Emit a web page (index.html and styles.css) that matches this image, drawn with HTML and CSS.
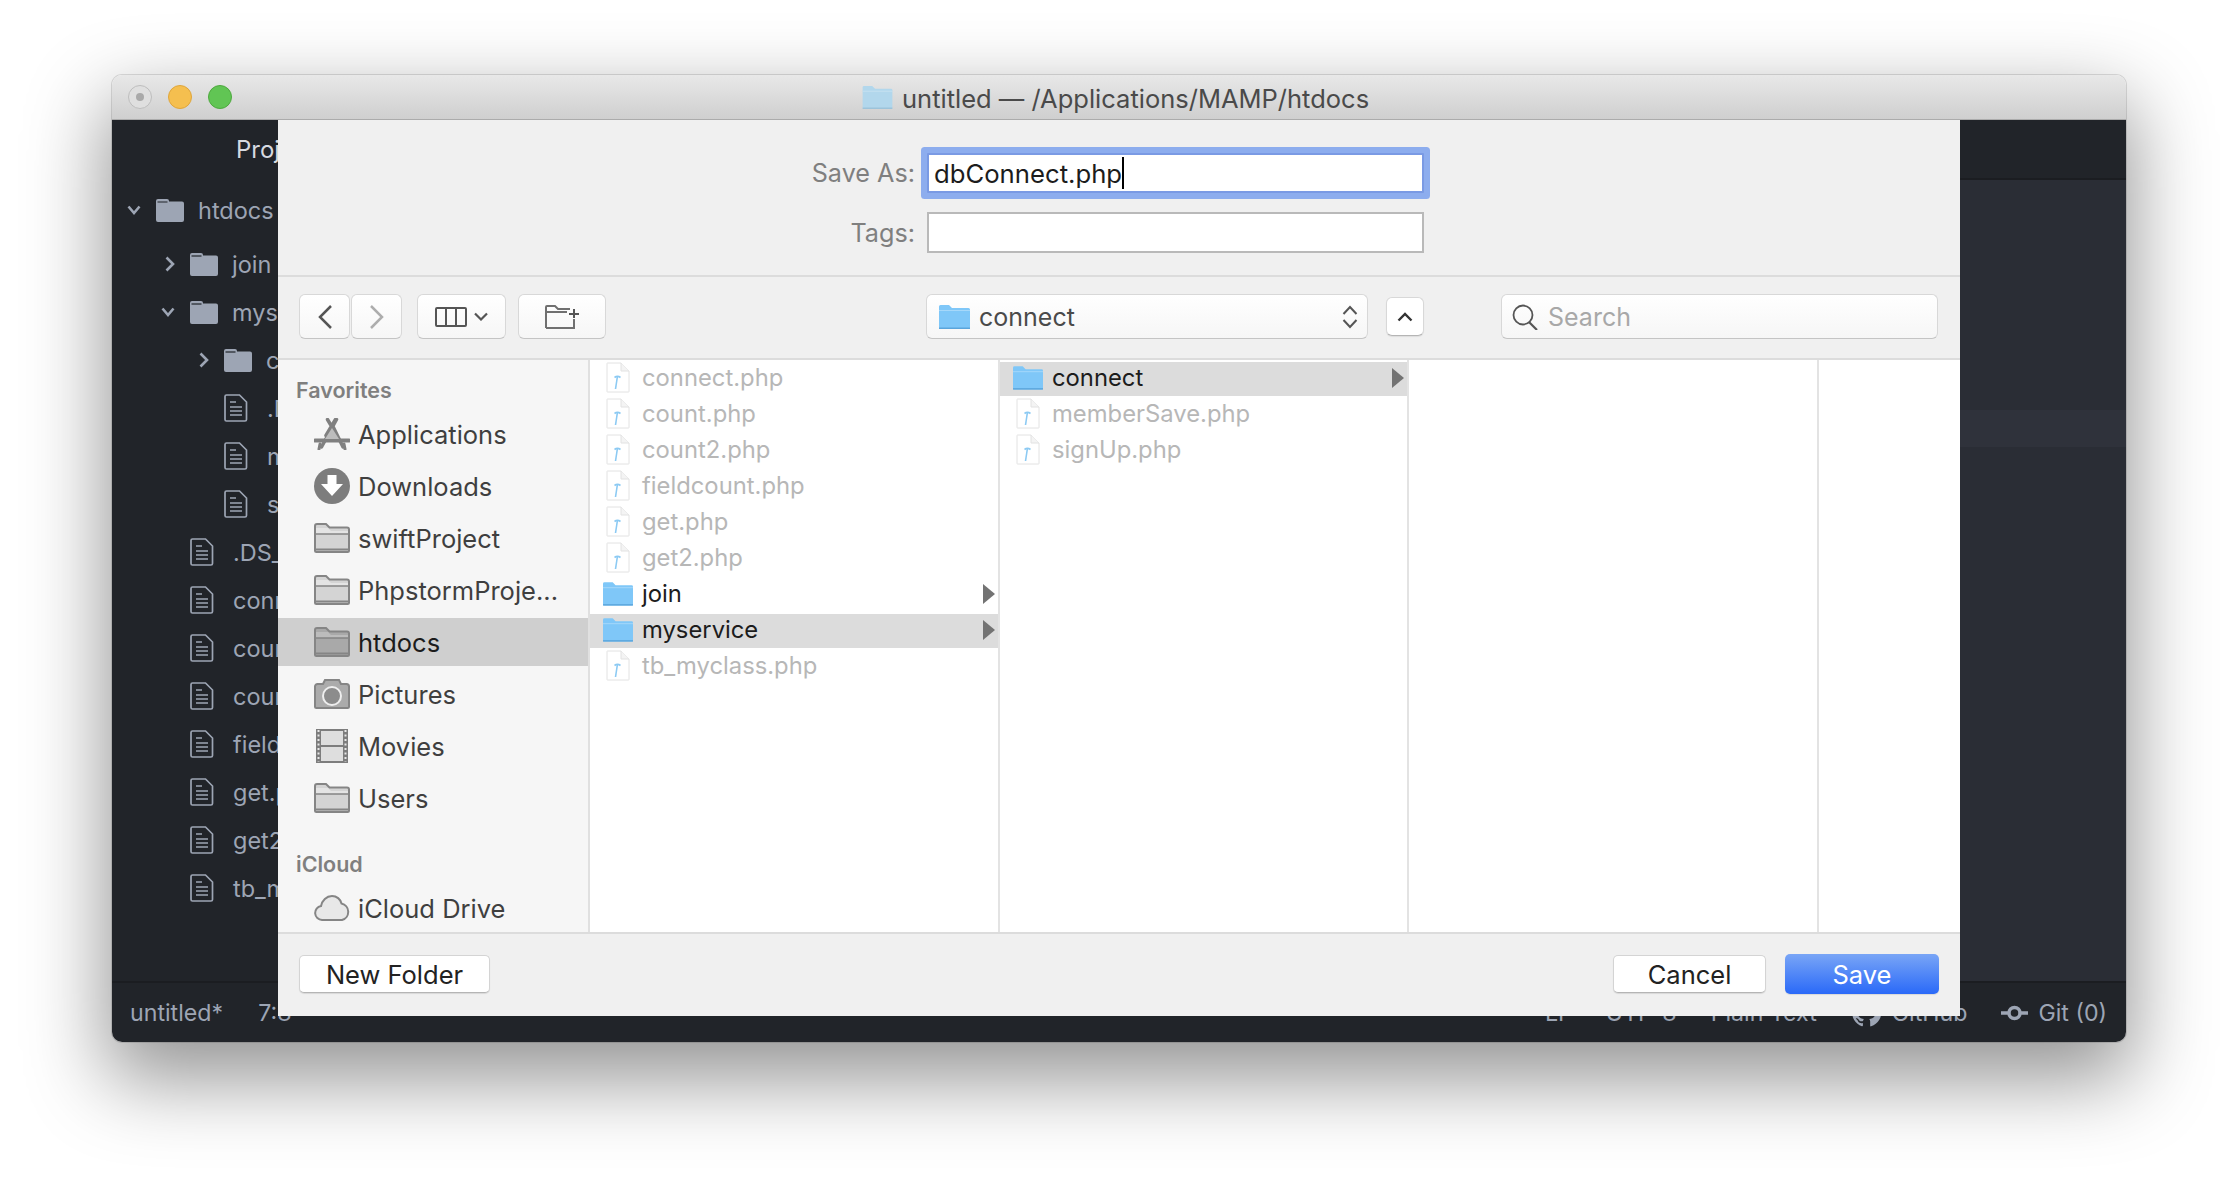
FILE: index.html
```html
<!DOCTYPE html>
<html lang="en">
<head>
<meta charset="utf-8">
<title>untitled — /Applications/MAMP/htdocs</title>
<link rel="stylesheet" href="styles.css">
</head>
<body>
<svg class="defs" width="0" height="0" aria-hidden="true">
  <symbol id="tree-folder" viewBox="0 0 28 24"><path d="M0 3a2 2 0 0 1 2-2h9a2 2 0 0 1 2 2v.5h13a2 2 0 0 1 2 2V22a2 2 0 0 1-2 2H2a2 2 0 0 1-2-2z" fill="#9da5b4"/><path d="M1.500 4h10" stroke="#212429" stroke-width="1.200"/></symbol>
  <symbol id="tree-doc" viewBox="0 0 24 28"><path d="M2.500 1h13l7 7v17.500a1.500 1.500 0 0 1-1.500 1.500H2.500A1.500 1.500 0 0 1 1 25.500v-23A1.500 1.500 0 0 1 2.500 1z" fill="none" stroke="#9da5b4" stroke-width="1.700"/><path d="M6 8h6M6 13h12M6 17h12M6 21h12" stroke="#9da5b4" stroke-width="1.700"/></symbol>
  <symbol id="chev-down" viewBox="0 0 14 10"><path d="M1.500 1.500 7 8l5.500-6.500" fill="none" stroke="#9da5b4" stroke-width="2.600"/></symbol>
  <symbol id="chev-right" viewBox="0 0 10 16"><path d="M1.500 1.500 8 8l-6.500 6.500" fill="none" stroke="#9da5b4" stroke-width="2.600"/></symbol>
  <symbol id="blue-folder" viewBox="0 0 31 25"><path d="M0 2.500A1.500 1.500 0 0 1 1.500 1H10l3 3h16.500A1.500 1.500 0 0 1 31 5.500V23.500a1.500 1.500 0 0 1-1.500 1.500h-28A1.500 1.500 0 0 1 0 23.500z" fill="var(--fb,#7fc7f8)"/><path d="M0 6h31v1H0z" fill="var(--fl,#a6d8fa)"/><path d="M0 23.500h31v1.500H0z" fill="var(--fs,#5aa5dc)"/></symbol>
  <symbol id="php-doc" viewBox="0 0 24 31"><path d="M1.500 1H15l8 8v20.500a.5.5 0 0 1-.5.5h-21a.5.5 0 0 1-.5-.5V1.500a.5.5 0 0 1 .5-.5z" fill="#fff" stroke="#e2e2e2"/><path d="M15 1v8h8" fill="#f4f4f4" stroke="#e2e2e2"/><path d="M11.500 14 9.500 27" stroke="#8ccaf3" stroke-width="1.600"/><path d="M8.500 15.500c2-1.500 4-1.500 6 0" fill="none" stroke="#8ccaf3" stroke-width="1.600"/></symbol>
  <symbol id="side-folder" viewBox="0 0 36 30"><path d="M1 27.500V3a2 2 0 0 1 2-2h9l3.500 3.500H33a2 2 0 0 1 2 2v21a1.500 1.500 0 0 1-1.500 1.500h-31A1.500 1.500 0 0 1 1 27.500z" fill="var(--sf,#d4d4d4)" stroke="#858585" stroke-width="2"/><path d="M2 5h12l3 3h17v3H2z" fill="var(--st,#e4e4e4)"/><path d="M2 11h32" stroke="#858585" stroke-width="1.500"/><path d="M2 26.500h32" stroke="#858585" stroke-width="2"/></symbol>
  <symbol id="side-apps" viewBox="0 0 36 32"><path d="M13.500 1.500l3 5M22.500 1.500 7.500 29M12 17.500 21.500 1.500M18 6.500 29 29" fill="none" stroke="#808080" stroke-width="3.500" stroke-linecap="round"/><path d="M1 22.500h34" stroke="#808080" stroke-width="4" stroke-linecap="round"/><path d="M18 10 11 21h14z" fill="#bdbdbd"/><path d="M6 26l-1 5M30 26l1 5" stroke="#808080" stroke-width="3" stroke-linecap="round"/></symbol>
  <symbol id="side-down" viewBox="0 0 36 36"><circle cx="18" cy="18" r="18" fill="#7d7d7d"/><path d="M13.500 7h9v9H29L18 28 7 16h6.500z" fill="#fff"/></symbol>
  <symbol id="side-camera" viewBox="0 0 36 30"><path d="M1 7.500A2.500 2.500 0 0 1 3.500 5H9l2-4h14l2 4h5.500A2.500 2.500 0 0 1 35 7.500v20a1.500 1.500 0 0 1-1.500 1.500h-31A1.500 1.500 0 0 1 1 27.500z" fill="#ababab" stroke="#858585" stroke-width="2"/><circle cx="18" cy="17" r="9" fill="#8c8c8c" stroke="#eee" stroke-width="2"/></symbol>
  <symbol id="side-film" viewBox="0 0 32 34"><rect width="32" height="34" fill="#7d7d7d"/><rect x="5" y="2" width="22" height="14" fill="#dedede"/><rect x="5" y="18" width="22" height="14" fill="#dedede"/><path d="M2.500 1v32M29.500 1v32" stroke="#e8e8e8" stroke-width="2" stroke-dasharray="2 2.500"/></symbol>
  <symbol id="side-cloud" viewBox="0 0 36 26"><path d="M8 25a7 7 0 0 1-1-13.900C8 5.500 12.500 1 18 1c4.700 0 8.500 3.200 9.500 7.500A8.500 8.500 0 0 1 28 25z" fill="#e8e8e8" stroke="#858585" stroke-width="2"/></symbol>
  <symbol id="arrow" viewBox="0 0 12 20"><path d="M0 0l12 10L0 20z" fill="#737373"/></symbol>
</svg>

<div class="window">
  <header class="titlebar">
    <div class="lights"><span class="light light-close"></span><span class="light light-min"></span><span class="light light-max"></span></div>
    <div class="title"><svg class="title-folder"><use href="#blue-folder"/></svg><span class="title-text">untitled — /Applications/MAMP/htdocs</span></div>
  </header>

  <div class="app">
    <div class="main">
      <aside class="tree">
        <div class="tree-head">Project</div>
        <div class="tree-list">
          <div class="t-row d0 first"><svg class="chev-d"><use href="#chev-down"/></svg><svg class="t-folder"><use href="#tree-folder"/></svg><span>htdocs</span></div>
          <div class="t-row d1"><svg class="chev-r"><use href="#chev-right"/></svg><svg class="t-folder"><use href="#tree-folder"/></svg><span>join</span></div>
          <div class="t-row d1"><svg class="chev-d"><use href="#chev-down"/></svg><svg class="t-folder"><use href="#tree-folder"/></svg><span>myservice</span></div>
          <div class="t-row d2"><svg class="chev-r"><use href="#chev-right"/></svg><svg class="t-folder"><use href="#tree-folder"/></svg><span>connect</span></div>
          <div class="t-row d2"><svg class="t-doc"><use href="#tree-doc"/></svg><span>.DS_Store</span></div>
          <div class="t-row d2"><svg class="t-doc"><use href="#tree-doc"/></svg><span>memberSave.php</span></div>
          <div class="t-row d2"><svg class="t-doc"><use href="#tree-doc"/></svg><span>signUp.php</span></div>
          <div class="t-row d1"><svg class="t-doc"><use href="#tree-doc"/></svg><span>.DS_Store</span></div>
          <div class="t-row d1"><svg class="t-doc"><use href="#tree-doc"/></svg><span>connect.php</span></div>
          <div class="t-row d1"><svg class="t-doc"><use href="#tree-doc"/></svg><span>count.php</span></div>
          <div class="t-row d1"><svg class="t-doc"><use href="#tree-doc"/></svg><span>count2.php</span></div>
          <div class="t-row d1"><svg class="t-doc"><use href="#tree-doc"/></svg><span>fieldcount.php</span></div>
          <div class="t-row d1"><svg class="t-doc"><use href="#tree-doc"/></svg><span>get.php</span></div>
          <div class="t-row d1"><svg class="t-doc"><use href="#tree-doc"/></svg><span>get2.php</span></div>
          <div class="t-row d1"><svg class="t-doc"><use href="#tree-doc"/></svg><span>tb_myclass.php</span></div>
        </div>
      </aside>
      <section class="editor">
        <div class="editor-head"></div>
        <div class="editor-body"><div class="cursor-line"></div></div>
      </section>
    </div>
    <footer class="status">
      <span class="st-file">untitled*</span><span class="st-pos">7:8</span>
      <div class="st-right">
        <span>LF</span><span>UTF-8</span><span>Plain Text</span>
        <span class="st-item"><svg class="st-gh" viewBox="0 0 32 32"><path d="M16 1a15 15 0 0 0-4.700 29.200c.700.100 1-.300 1-.700v-2.600c-4.200.900-5-1.800-5-1.800-.700-1.700-1.700-2.200-1.700-2.200-1.300-.900.100-.900.100-.900 1.500.100 2.300 1.500 2.300 1.500 1.300 2.300 3.500 1.600 4.400 1.200.100-1 .500-1.600 1-2-3.300-.400-6.800-1.700-6.800-7.400 0-1.600.600-3 1.500-4-.100-.400-.700-1.900.200-4 0 0 1.300-.400 4.100 1.500a14 14 0 0 1 7.500 0c2.900-1.900 4.100-1.500 4.100-1.500.800 2.100.300 3.600.100 4 1 1 1.500 2.400 1.500 4 0 5.800-3.500 7-6.800 7.400.500.500 1 1.400 1 2.800v4.100c0 .400.300.900 1 .700A15 15 0 0 0 16 1z" fill="#9da5b4"/></svg>GitHub</span>
        <span class="st-item"><svg class="st-git" viewBox="0 0 27 16"><circle cx="13.500" cy="8" r="5.500" fill="none" stroke="#9da5b4" stroke-width="3.500"/><path d="M0 8h8M19 8h8" stroke="#9da5b4" stroke-width="3.500"/></svg>Git (0)</span>
      </div>
    </footer>

    <div class="sheet">
      <div class="form">
        <label class="f-label">Save As:</label>
        <div class="f-input f-focus">dbConnect.php<i class="caret"></i></div>
        <label class="f-label">Tags:</label>
        <div class="f-input"></div>
      </div>

      <div class="toolbar">
        <button class="btn btn-back"><svg class="nav" viewBox="0 0 16 26"><path d="M14 2 3 13l11 11" fill="none" stroke="#555" stroke-width="2.500"/></svg></button>
        <button class="btn btn-fwd"><svg class="nav" viewBox="0 0 16 26"><path d="M2 2l11 11L2 24" fill="none" stroke="#adadad" stroke-width="2.500"/></svg></button>
        <button class="btn btn-view"><svg class="cols" viewBox="0 0 32 20"><rect x="1" y="1" width="30" height="18" rx="1" fill="none" stroke="#555" stroke-width="2"/><path d="M11 1v18M21 1v18" stroke="#555" stroke-width="2"/></svg><svg class="mini" viewBox="0 0 14 9"><path d="M1 1.500l6 6 6-6" fill="none" stroke="#555" stroke-width="2.200"/></svg></button>
        <button class="btn btn-new"><svg class="newf" viewBox="0 0 34 24"><path d="M1 23V2a1 1 0 0 1 1-1h8l3 3h12M29 14v9H1M2 7h20" fill="none" stroke="#707070" stroke-width="2"/><path d="M24 9h10M29 4v9" stroke="#555" stroke-width="2" fill="none"/></svg></button>
        <button class="btn btn-path"><svg class="path-folder"><use href="#blue-folder"/></svg><span>connect</span><svg class="stepper" viewBox="0 0 16 24"><path d="M1.500 9 8 2l6.500 7M1.500 15 8 22l6.500-7" fill="none" stroke="#555" stroke-width="2"/></svg></button>
        <button class="btn btn-up"><svg class="up" viewBox="0 0 16 10"><path d="M1.500 8.500 8 2l6.500 6.500" fill="none" stroke="#333" stroke-width="2.400"/></svg></button>
        <div class="btn search"><svg class="mag" viewBox="0 0 26 26"><circle cx="11" cy="11" r="9.500" fill="none" stroke="#555" stroke-width="1.800"/><path d="M17 18l8 8" stroke="#555" stroke-width="2.200"/></svg><span>Search</span></div>
      </div>

      <div class="browser">
        <nav class="side">
          <div class="s-head">Favorites</div>
          <div class="s-row"><span class="s-ic"><svg class="i-apps"><use href="#side-apps"/></svg></span>Applications</div>
          <div class="s-row"><span class="s-ic"><svg class="i-down"><use href="#side-down"/></svg></span>Downloads</div>
          <div class="s-row"><span class="s-ic"><svg class="i-fold"><use href="#side-folder"/></svg></span>swiftProject</div>
          <div class="s-row"><span class="s-ic"><svg class="i-fold"><use href="#side-folder"/></svg></span>PhpstormProje...</div>
          <div class="s-row s-sel"><span class="s-ic"><svg class="i-fold"><use href="#side-folder"/></svg></span>htdocs</div>
          <div class="s-row"><span class="s-ic"><svg class="i-fold"><use href="#side-camera"/></svg></span>Pictures</div>
          <div class="s-row"><span class="s-ic"><svg class="i-film"><use href="#side-film"/></svg></span>Movies</div>
          <div class="s-row"><span class="s-ic"><svg class="i-fold"><use href="#side-folder"/></svg></span>Users</div>
          <div class="s-head s-head2">iCloud</div>
          <div class="s-row"><span class="s-ic"><svg class="i-cloud"><use href="#side-cloud"/></svg></span>iCloud Drive</div>
        </nav>
        <div class="col">
          <div class="row off"><svg class="doc"><use href="#php-doc"/></svg>connect.php</div>
          <div class="row off"><svg class="doc"><use href="#php-doc"/></svg>count.php</div>
          <div class="row off"><svg class="doc"><use href="#php-doc"/></svg>count2.php</div>
          <div class="row off"><svg class="doc"><use href="#php-doc"/></svg>fieldcount.php</div>
          <div class="row off"><svg class="doc"><use href="#php-doc"/></svg>get.php</div>
          <div class="row off"><svg class="doc"><use href="#php-doc"/></svg>get2.php</div>
          <div class="row"><svg class="fold"><use href="#blue-folder"/></svg>join<svg class="arr"><use href="#arrow"/></svg></div>
          <div class="row sel"><svg class="fold"><use href="#blue-folder"/></svg>myservice<svg class="arr"><use href="#arrow"/></svg></div>
          <div class="row off"><svg class="doc"><use href="#php-doc"/></svg>tb_myclass.php</div>
        </div>
        <div class="col">
          <div class="row sel"><svg class="fold"><use href="#blue-folder"/></svg>connect<svg class="arr"><use href="#arrow"/></svg></div>
          <div class="row off"><svg class="doc"><use href="#php-doc"/></svg>memberSave.php</div>
          <div class="row off"><svg class="doc"><use href="#php-doc"/></svg>signUp.php</div>
        </div>
        <div class="col"></div>
        <div class="col col-last"></div>
      </div>

      <div class="foot">
        <button class="pbtn">New Folder</button>
        <div class="foot-right">
          <button class="pbtn pbtn-cancel">Cancel</button>
          <button class="pbtn pbtn-save">Save</button>
        </div>
      </div>
    </div>
  </div>
</div>
</body>
</html>
```
FILE: styles.css
```css
* { box-sizing: border-box; }
html, body { margin: 0; height: 100%; }
body {
  background: #fff;
  padding: 75px 112px;
  font-family: Inter, "Liberation Sans", sans-serif;
  overflow: hidden;
}
.defs { display: block; height: 0; }
svg { display: block; flex: none; }
button { font: inherit; padding: 0; margin: 0; }

.window {
  width: 2014px;
  height: 967px;
  border-radius: 10px;
  overflow: hidden;
  display: flex;
  flex-direction: column;
  box-shadow: 0 32px 80px 6px rgba(0, 0, 0, .42), 0 0 0 1px rgba(0, 0, 0, .12);
}

/* title bar */
.titlebar {
  height: 45px;
  flex: none;
  display: flex;
  align-items: center;
  background: linear-gradient(#e8e8e8, #cfcfcf);
  border-bottom: 1px solid #ababab;
}
.lights { display: flex; gap: 16px; padding-left: 16px; }
.light { width: 24px; height: 24px; border-radius: 50%; border: 1px solid; display: flex; align-items: center; justify-content: center; }
.light-close { background: #dfdfdf; border-color: #bdbdbd; }
.light-close::after { content: ""; width: 8px; height: 8px; border-radius: 50%; background: #a9a9a9; }
.light-min { background: #f5bf4f; border-color: #dea53c; }
.light-max { background: #61c554; border-color: #4ea83f; }
.title {
  display: flex;
  align-items: center;
  gap: 9px;
  margin-left: 630px;
  font-size: 25.500px;
  color: #4a4a4a;
  white-space: nowrap;
}
.title-text { padding-top: 2px; }
.title-folder { width: 31px; height: 24px; --fb: #b2d7ec; --fl: #c5e1f1; --fs: #9cc3da; }

/* dark app behind the sheet */
.app { flex: 1; position: relative; display: flex; flex-direction: column; min-height: 0; }
.main { flex: 1; display: flex; min-height: 0; }
.tree { width: 420px; flex: none; background: #212429; color: #9da5b4; }
.tree-head {
  height: 60px;
  padding: 13px 0 0 124px;
  font-size: 24px;
  line-height: 34px;
  color: #d7dae0;
}
.tree-list { display: flex; flex-direction: column; }
.t-row { height: 48px; display: flex; align-items: center; font-size: 23.500px; white-space: nowrap; }
.t-row.first { margin: 6px 0; }
.d0 { padding-left: 44px; }
.d1 { padding-left: 78px; }
.d2 { padding-left: 112px; }
.chev-d { width: 14px; height: 10px; margin: 0 15px 0 -29px; }
.chev-r { width: 10px; height: 16px; margin: 0 15px 0 -25px; }
.t-folder { width: 28px; height: 24px; margin-right: 14px; }
.t-doc { width: 24px; height: 28px; margin-right: 19px; }

.editor { flex: 1; background: #2a2d35; display: flex; flex-direction: column; }
.editor-head { height: 60px; background: #212429; border-bottom: 2px solid #1b1d21; flex: none; }
.editor-body { flex: 1; padding-top: 230px; }
.cursor-line { height: 37px; background: #2f323b; }

.status {
  height: 61px;
  flex: none;
  background: #212429;
  border-top: 2px solid #1b1d21;
  display: flex;
  align-items: center;
  padding: 0 19px 0 18px;
  color: #9da5b4;
  font-size: 23.200px;
  white-space: nowrap;
}
.st-pos { margin-left: 35px; }
.st-right { margin-left: auto; display: flex; align-items: center; gap: 34px; }
.st-item { display: flex; align-items: center; gap: 10px; }
.st-gh { width: 31px; height: 31px; }
.st-git { width: 27px; height: 16px; }

/* save sheet */
.sheet {
  position: absolute;
  left: 166px;
  top: 0;
  width: 1682px;
  height: 896px;
  display: flex;
  flex-direction: column;
  background: #f0f0f0;
  color: #222;
}
.form {
  height: 157px;
  flex: none;
  border-bottom: 2px solid #dcdcdc;
  display: grid;
  grid-template-columns: 637px 497px;
  grid-template-rows: 40px 41px;
  column-gap: 12px;
  row-gap: 19px;
  padding-top: 33px;
}
.f-label { justify-self: end; align-self: center; font-size: 25.200px; color: #7f7f7f; }
.f-input {
  background: #fff;
  border: 2px solid #b9b9b9;
  display: flex;
  align-items: center;
  padding-left: 5px;
  font-size: 25.700px;
  color: #1c1c1c;
}
.f-focus { border-color: #7a9ae4; box-shadow: 0 0 0 6px #8dadee; border-radius: 1px; }
.caret { width: 2px; height: 32px; background: #000; }

.toolbar {
  height: 83px;
  flex: none;
  border-bottom: 2px solid #dcdcdc;
  display: flex;
  align-items: center;
  padding: 0 22px 2px 21px;
}
.btn {
  height: 45px;
  border: 1px solid #d8d8d8;
  border-bottom-color: #c4c4c4;
  border-radius: 6px;
  background: linear-gradient(#fff, #f6f6f6);
  display: flex;
  align-items: center;
  justify-content: center;
  flex: none;
}
.btn-back { width: 51px; }
.btn-fwd { width: 51px; margin-left: 1px; }
.btn-view { width: 89px; margin-left: 15px; gap: 7px; }
.btn-new { width: 88px; margin-left: 12px; }
.nav { width: 16px; height: 26px; }
.cols { width: 32px; height: 20px; }
.mini { width: 14px; height: 9px; }
.newf { width: 34px; height: 24px; }
.btn-path {
  width: 442px;
  margin-left: 320px;
  justify-content: flex-start;
  padding: 0 9px 0 12px;
  gap: 9px;
  font-size: 25px;
  color: #4a4a4a;
}
.path-folder { width: 31px; height: 25px; }
.stepper { width: 16px; height: 24px; margin-left: auto; }
.btn-up { width: 38px; height: 39px; margin-left: 18px; background: #fff; border-bottom-color: #b5b5b5; box-shadow: 0 1px 1px rgba(0, 0, 0, .08); }
.up { width: 16px; height: 10px; }
.search { width: 437px; margin-left: 77px; justify-content: flex-start; padding-left: 10px; gap: 10px; font-size: 25px; color: #a8a8a8; }
.mag { width: 26px; height: 26px; }

/* browser */
.browser {
  flex: 1;
  min-height: 0;
  display: grid;
  grid-template-columns: 312px 410px 409px 410px 1fr;
  background: #fff;
}
.side {
  background: #f6f6f6;
  border-right: 2px solid #e0e0e0;
  overflow: hidden;
  padding-top: 16px;
  display: flex;
  flex-direction: column;
}
.s-head { height: 28px; flex: none; line-height: 28px; margin-bottom: 5px; padding-left: 18px; font-size: 21.500px; font-weight: 600; color: #7f7f7f; }
.s-head2 { margin-top: 25px; }
.s-row {
  height: 48px;
  flex: none;
  margin: 1px 0 3px;
  padding-left: 36px;
  display: flex;
  align-items: center;
  gap: 8px;
  font-size: 25.500px;
  color: #3f3f3f;
  white-space: nowrap;
}
.s-sel { background: #cfcfcf; color: #1c1c1c; --sf: #a9a9a9; --st: #bcbcbc; }
.s-ic { width: 36px; height: 36px; display: flex; align-items: center; justify-content: center; flex: none; }
.i-apps { width: 36px; height: 32px; }
.i-down { width: 36px; height: 36px; }
.i-fold { width: 36px; height: 30px; }
.i-film { width: 32px; height: 34px; }
.i-cloud { width: 36px; height: 26px; }

.col { border-right: 2px solid #e3e3e3; font-size: 23.800px; }
.col-last { border-right: 0; }
.row { height: 34px; margin-top: 2px; display: flex; align-items: center; padding: 0 3px 3px 13px; color: #1c1c1c; white-space: nowrap; }
.row.off { color: #b7b7b7; }
.row.sel { background: #dcdcdc; }
.doc { width: 24px; height: 31px; margin: 0 12px 0 3px; }
.fold { width: 30px; height: 25px; margin-right: 9px; }
.arr { width: 12px; height: 20px; margin-left: auto; }

/* footer */
.foot {
  height: 84px;
  flex: none;
  border-top: 2px solid #dcdcdc;
  display: flex;
  align-items: center;
  justify-content: space-between;
  padding: 0 21px 2px;
}
.foot-right { display: flex; gap: 19px; }
.pbtn {
  height: 38px;
  width: 191px;
  padding-top: 1px;
  background: #fff;
  border: 1px solid #d4d4d4;
  border-bottom-color: #b5b5b5;
  border-radius: 5px;
  font-size: 25.500px;
  color: #222;
  box-shadow: 0 1px 1px rgba(0, 0, 0, .1);
}
.pbtn-cancel { width: 153px; }
.pbtn-save {
  width: 154px;
  height: 40px;
  margin-top: -1px;
  color: #fff;
  border: 0;
  background: linear-gradient(#79a5f6, #2a69f8);
}
```
